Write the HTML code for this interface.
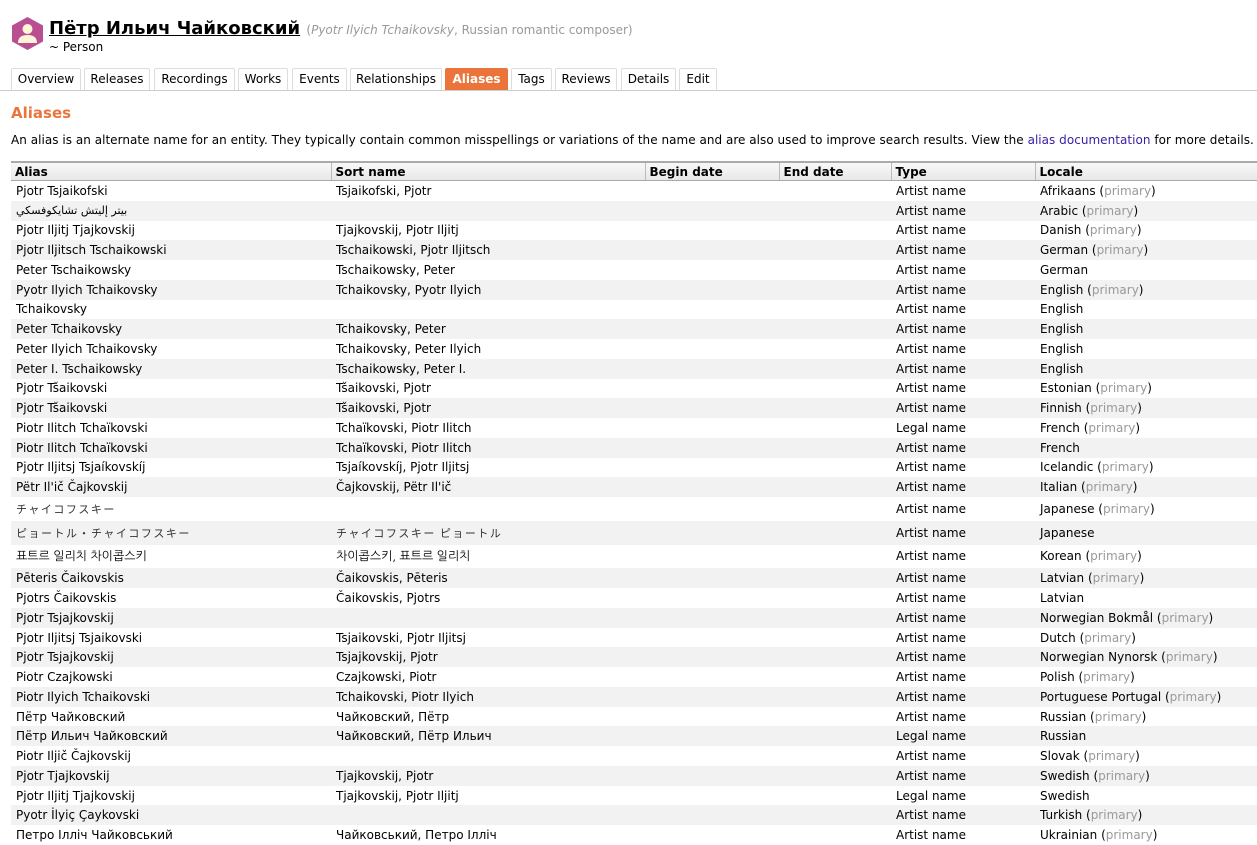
<!DOCTYPE html>
<html><head><meta charset="utf-8"><style>
body{margin:0;background:#fff;font-family:"DejaVu Sans","Liberation Sans","Noto Sans CJK JP",sans-serif;font-size:12px;color:#000;width:1257px;height:842px;overflow:hidden;position:relative}
.icon{position:absolute;left:12px;top:17px}
.title{position:absolute;left:49px;top:18px;font-size:18px;font-weight:bold;white-space:nowrap}
.title u{text-decoration:underline}
.title .c{font-size:12px;font-weight:normal;color:#999}
.sub{position:absolute;left:49px;top:40px;font-size:12px}
.tabs{position:absolute;left:0;top:68px;width:1257px;height:22px;border-bottom:1px solid #ccc}
.tab{position:absolute;top:0;border:1px solid #ddd;border-bottom:none;box-sizing:border-box;height:22px;line-height:21px;text-align:center;font-size:12px;border-radius:2px 2px 0 0}
.tab.sel{background:#eb743b;color:#fff;font-weight:bold;border-color:#eb743b}
h2{position:absolute;left:11px;top:104px;margin:0;font-size:15px;color:#eb743b;font-weight:bold}
.desc{position:absolute;left:11px;top:133px;white-space:nowrap;font-size:12px;letter-spacing:0.03px}
.desc a{color:#3a1ea3;text-decoration:none}
table{position:absolute;left:11px;top:161px;border-collapse:collapse;table-layout:fixed;width:1260px}
th{text-align:left;font-weight:bold;height:17px;padding:0 4px;background:linear-gradient(#f8f8f8,#e8e8e8);border-top:2px solid #aaa;border-bottom:1px solid #aaa;border-left:1px solid #bbb;font-size:12px}
th:first-child{border-left:none}
td{padding:0 5px;height:19.75px;white-space:nowrap;overflow:hidden;font-size:12px}
tr.g td{background:#f2f2f2}
tr.j td{height:23.8px}
.p{color:#999}
.ja{font-family:"Noto Sans CJK JP",sans-serif;font-size:11px;letter-spacing:1.5px;color:#333}
</style></head><body>
<svg class="icon" width="31" height="33" viewBox="0 0 31 33"><polygon points="15.5,0 31,8.5 31,24.5 15.5,33 0,24.5 0,8.5" fill="#b94e91"/><circle cx="15.5" cy="12" r="5" fill="#fdf6d8"/><path d="M6 26 Q6 18 15.5 18 Q25 18 25 26 Z" fill="#fdf6d8"/></svg>
<div class="title"><u>Пётр Ильич Чайковский</u> <span class="c">(<i>Pyotr Ilyich Tchaikovsky</i>, Russian romantic composer)</span></div>
<div class="sub">~ Person</div>
<div class="tabs">
<div class="tab" style="left:11px;width:70px">Overview</div>
<div class="tab" style="left:84px;width:66px">Releases</div>
<div class="tab" style="left:154px;width:81px">Recordings</div>
<div class="tab" style="left:238px;width:50px">Works</div>
<div class="tab" style="left:292px;width:55px">Events</div>
<div class="tab" style="left:350px;width:92px">Relationships</div>
<div class="tab sel" style="left:445px;width:63px">Aliases</div>
<div class="tab" style="left:511px;width:41px">Tags</div>
<div class="tab" style="left:555px;width:62px">Reviews</div>
<div class="tab" style="left:621px;width:55px">Details</div>
<div class="tab" style="left:679px;width:38px">Edit</div>
</div>
<h2>Aliases</h2>
<div class="desc">An alias is an alternate name for an entity. They typically contain common misspellings or variations of the name and are also used to improve search results. View the <a>alias documentation</a> for more details.</div>
<table>
<colgroup><col style="width:320px"><col style="width:314px"><col style="width:134px"><col style="width:112px"><col style="width:144px"><col style="width:236px"></colgroup>
<tr><th>Alias</th><th>Sort name</th><th>Begin date</th><th>End date</th><th>Type</th><th>Locale</th></tr>
<tr><td>Pjotr Tsjaikofski</td><td>Tsjaikofski, Pjotr</td><td></td><td></td><td>Artist name</td><td>Afrikaans (<span class="p">primary</span>)</td></tr>
<tr class="g"><td style="font-size:11px">بيتر إليتش تشايكوفسكي</td><td></td><td></td><td></td><td>Artist name</td><td>Arabic (<span class="p">primary</span>)</td></tr>
<tr><td>Pjotr Iljitj Tjajkovskij</td><td>Tjajkovskij, Pjotr Iljitj</td><td></td><td></td><td>Artist name</td><td>Danish (<span class="p">primary</span>)</td></tr>
<tr class="g"><td>Pjotr Iljitsch Tschaikowski</td><td>Tschaikowski, Pjotr Iljitsch</td><td></td><td></td><td>Artist name</td><td>German (<span class="p">primary</span>)</td></tr>
<tr><td>Peter Tschaikowsky</td><td>Tschaikowsky, Peter</td><td></td><td></td><td>Artist name</td><td>German</td></tr>
<tr class="g"><td>Pyotr Ilyich Tchaikovsky</td><td>Tchaikovsky, Pyotr Ilyich</td><td></td><td></td><td>Artist name</td><td>English (<span class="p">primary</span>)</td></tr>
<tr><td>Tchaikovsky</td><td></td><td></td><td></td><td>Artist name</td><td>English</td></tr>
<tr class="g"><td>Peter Tchaikovsky</td><td>Tchaikovsky, Peter</td><td></td><td></td><td>Artist name</td><td>English</td></tr>
<tr><td>Peter Ilyich Tchaikovsky</td><td>Tchaikovsky, Peter Ilyich</td><td></td><td></td><td>Artist name</td><td>English</td></tr>
<tr class="g"><td>Peter I. Tschaikowsky</td><td>Tschaikowsky, Peter I.</td><td></td><td></td><td>Artist name</td><td>English</td></tr>
<tr><td>Pjotr Tšaikovski</td><td>Tšaikovski, Pjotr</td><td></td><td></td><td>Artist name</td><td>Estonian (<span class="p">primary</span>)</td></tr>
<tr class="g"><td>Pjotr Tšaikovski</td><td>Tšaikovski, Pjotr</td><td></td><td></td><td>Artist name</td><td>Finnish (<span class="p">primary</span>)</td></tr>
<tr><td>Piotr Ilitch Tchaïkovski</td><td>Tchaïkovski, Piotr Ilitch</td><td></td><td></td><td>Legal name</td><td>French (<span class="p">primary</span>)</td></tr>
<tr class="g"><td>Piotr Ilitch Tchaïkovski</td><td>Tchaïkovski, Piotr Ilitch</td><td></td><td></td><td>Artist name</td><td>French</td></tr>
<tr><td>Pjotr Iljitsj Tsjaíkovskíj</td><td>Tsjaíkovskíj, Pjotr Iljitsj</td><td></td><td></td><td>Artist name</td><td>Icelandic (<span class="p">primary</span>)</td></tr>
<tr class="g"><td>Pëtr Il'ič Čajkovskij</td><td>Čajkovskij, Pëtr Il'ič</td><td></td><td></td><td>Artist name</td><td>Italian (<span class="p">primary</span>)</td></tr>
<tr class="j"><td class="ja">チャイコフスキー</td><td></td><td></td><td></td><td>Artist name</td><td>Japanese (<span class="p">primary</span>)</td></tr>
<tr class="g j"><td class="ja">ピョートル・チャイコフスキー</td><td class="ja">チャイコフスキー ピョートル</td><td></td><td></td><td>Artist name</td><td>Japanese</td></tr>
<tr class="j"><td style="font-family:'NanumGothic','Noto Sans CJK KR',sans-serif">표트르 일리치 차이콥스키</td><td style="font-family:'NanumGothic','Noto Sans CJK KR',sans-serif">차이콥스키, 표트르 일리치</td><td></td><td></td><td>Artist name</td><td>Korean (<span class="p">primary</span>)</td></tr>
<tr class="g"><td>Pēteris Čaikovskis</td><td>Čaikovskis, Pēteris</td><td></td><td></td><td>Artist name</td><td>Latvian (<span class="p">primary</span>)</td></tr>
<tr><td>Pjotrs Čaikovskis</td><td>Čaikovskis, Pjotrs</td><td></td><td></td><td>Artist name</td><td>Latvian</td></tr>
<tr class="g"><td>Pjotr Tsjajkovskij</td><td></td><td></td><td></td><td>Artist name</td><td>Norwegian Bokmål (<span class="p">primary</span>)</td></tr>
<tr><td>Pjotr Iljitsj Tsjaikovski</td><td>Tsjaikovski, Pjotr Iljitsj</td><td></td><td></td><td>Artist name</td><td>Dutch (<span class="p">primary</span>)</td></tr>
<tr class="g"><td>Pjotr Tsjajkovskij</td><td>Tsjajkovskij, Pjotr</td><td></td><td></td><td>Artist name</td><td>Norwegian Nynorsk (<span class="p">primary</span>)</td></tr>
<tr><td>Piotr Czajkowski</td><td>Czajkowski, Piotr</td><td></td><td></td><td>Artist name</td><td>Polish (<span class="p">primary</span>)</td></tr>
<tr class="g"><td>Piotr Ilyich Tchaikovski</td><td>Tchaikovski, Piotr Ilyich</td><td></td><td></td><td>Artist name</td><td>Portuguese Portugal (<span class="p">primary</span>)</td></tr>
<tr><td>Пётр Чайковский</td><td>Чайковский, Пётр</td><td></td><td></td><td>Artist name</td><td>Russian (<span class="p">primary</span>)</td></tr>
<tr class="g"><td>Пётр Ильич Чайковский</td><td>Чайковский, Пётр Ильич</td><td></td><td></td><td>Legal name</td><td>Russian</td></tr>
<tr><td>Piotr Iljič Čajkovskij</td><td></td><td></td><td></td><td>Artist name</td><td>Slovak (<span class="p">primary</span>)</td></tr>
<tr class="g"><td>Pjotr Tjajkovskij</td><td>Tjajkovskij, Pjotr</td><td></td><td></td><td>Artist name</td><td>Swedish (<span class="p">primary</span>)</td></tr>
<tr><td>Pjotr Iljitj Tjajkovskij</td><td>Tjajkovskij, Pjotr Iljitj</td><td></td><td></td><td>Legal name</td><td>Swedish</td></tr>
<tr class="g"><td>Pyotr İlyiç Çaykovski</td><td></td><td></td><td></td><td>Artist name</td><td>Turkish (<span class="p">primary</span>)</td></tr>
<tr><td>Петро Ілліч Чайковський</td><td>Чайковський, Петро Ілліч</td><td></td><td></td><td>Artist name</td><td>Ukrainian (<span class="p">primary</span>)</td></tr>
</table>
</body></html>
